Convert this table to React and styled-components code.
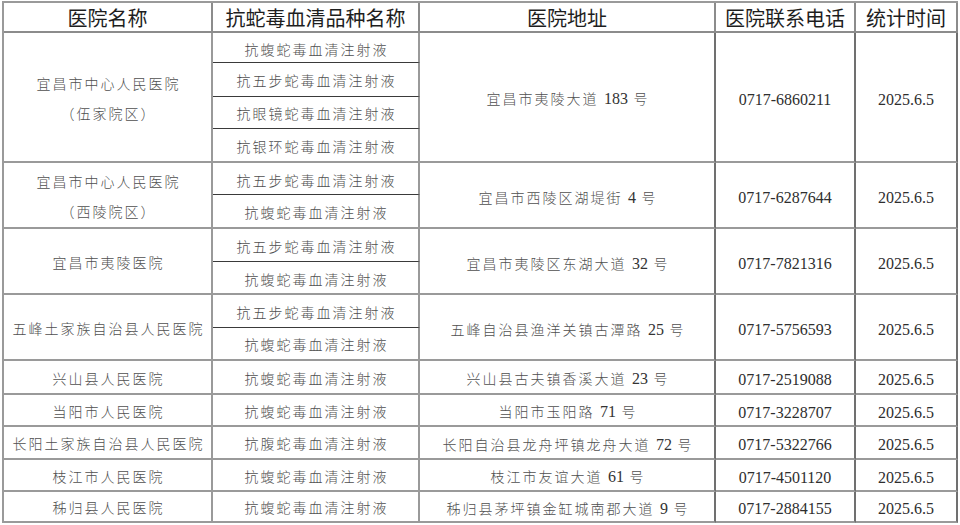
import React from "react";
import styled, { createGlobalStyle } from "styled-components";

const Global = createGlobalStyle`
  html, body { margin: 0; padding: 0; background: #fff; }
  body { font-family: "Liberation Serif", "Noto Sans CJK SC", serif; }
`;

const Page = styled.div`
  padding: 1px 0 0 2px;
`;

const Grid = styled.div`
  display: grid;
  grid-template-columns: 209px 207px 296px 140px 102px;
  grid-template-rows: ${(p) => p.$rows};
  border-top: 2px solid #9a9a9a;
  border-left: 2px solid #9a9a9a;
  width: max-content;
`;

const HeadCell = styled.div`
  box-sizing: border-box;
  display: flex;
  align-items: center;
  justify-content: center;
  border-right: 2px solid #8c8c8c;
  border-bottom: 2px solid #8c8c8c;
  font-family: "Noto Sans CJK SC", sans-serif;
  font-size: 20px;
  font-weight: 400;
  color: #1e1e1e;
  white-space: nowrap;
`;

const Cell = styled.div`
  box-sizing: border-box;
  display: flex;
  flex-direction: column;
  align-items: center;
  justify-content: center;
  padding-top: 6px;
  grid-row: span ${(p) => p.$span || 1};
  border-right: 2px solid ${(p) => (p.$dark ? "#707070" : "#9a9a9a")};
  border-bottom: ${(p) => (p.$inner ? "1px solid #3a3a3a" : "2px solid #9a9a9a")};
  white-space: nowrap;
`;

const CnText = styled.div`
  font-family: "Liberation Serif", "Noto Sans CJK SC", serif;
  font-size: 14px;
  font-weight: 300;
  letter-spacing: 2px;
  padding-left: 2px;
  color: #505050;
  line-height: 30px;
`;

const Num = styled.span`
  font-family: "Liberation Serif", serif;
  font-size: 16px;
  letter-spacing: 0;
  color: #333;
  font-weight: 400;
`;

const NumText = styled.div`
  font-family: "Liberation Serif", serif;
  font-size: 16px;
  color: #2e2e2e;
`;

const withNums = (s) =>
  s.split(/(\d+)/).map((part, i) =>
    /^\d+$/.test(part) ? <Num key={i}>{part}</Num> : part
  );

const groups = [
  {
    name: ["宜昌市中心人民医院", "（伍家院区）"],
    serums: ["抗蝮蛇毒血清注射液", "抗五步蛇毒血清注射液", "抗眼镜蛇毒血清注射液", "抗银环蛇毒血清注射液"],
    addr: "宜昌市夷陵大道 183 号",
    phone: "0717-6860211",
  },
  {
    name: ["宜昌市中心人民医院", "（西陵院区）"],
    serums: ["抗五步蛇毒血清注射液", "抗蝮蛇毒血清注射液"],
    addr: "宜昌市西陵区湖堤街 4 号",
    phone: "0717-6287644",
  },
  {
    name: ["宜昌市夷陵医院"],
    serums: ["抗五步蛇毒血清注射液", "抗蝮蛇毒血清注射液"],
    addr: "宜昌市夷陵区东湖大道 32 号",
    phone: "0717-7821316",
  },
  {
    name: ["五峰土家族自治县人民医院"],
    serums: ["抗五步蛇毒血清注射液", "抗蝮蛇毒血清注射液"],
    addr: "五峰自治县渔洋关镇古潭路 25 号",
    phone: "0717-5756593",
  },
  {
    name: ["兴山县人民医院"],
    serums: ["抗蝮蛇毒血清注射液"],
    addr: "兴山县古夫镇香溪大道 23 号",
    phone: "0717-2519088",
  },
  {
    name: ["当阳市人民医院"],
    serums: ["抗蝮蛇毒血清注射液"],
    addr: "当阳市玉阳路 71 号",
    phone: "0717-3228707",
  },
  {
    name: ["长阳土家族自治县人民医院"],
    serums: ["抗腹蛇毒血清注射液"],
    addr: "长阳自治县龙舟坪镇龙舟大道 72 号",
    phone: "0717-5322766",
  },
  {
    name: ["枝江市人民医院"],
    serums: ["抗蝮蛇毒血清注射液"],
    addr: "枝江市友谊大道 61 号",
    phone: "0717-4501120",
  },
  {
    name: ["秭归县人民医院"],
    serums: ["抗蝮蛇毒血清注射液"],
    addr: "秭归县茅坪镇金缸城南郡大道 9 号",
    phone: "0717-2884155",
  },
];

const rowHeights = [30, 33.7, 32.6, 33.7, 32.3, 34, 32.7, 33.3, 32.4, 33.3, 34, 32, 33, 32, 30.7];
const headers = ["医院名称", "抗蛇毒血清品种名称", "医院地址", "医院联系电话", "统计时间"];

export default function App() {
  const rows = ["30px", ...rowHeights.map((h) => `${h}px`)].join(" ");
  return (
    <Page>
      <Global />
      <Grid $rows={rows}>
        {headers.map((h) => (
          <HeadCell key={h}>{h}</HeadCell>
        ))}
        {groups.map((g, gi) => {
          const n = g.serums.length;
          return (
            <React.Fragment key={gi}>
              <Cell $span={n}>
                {g.name.map((l) => (
                  <CnText key={l}>{l}</CnText>
                ))}
              </Cell>
              <Cell $inner={n > 1}>
                <CnText>{g.serums[0]}</CnText>
              </Cell>
              <Cell $span={n} $dark>
                <CnText>{withNums(g.addr)}</CnText>
              </Cell>
              <Cell $span={n} $dark>
                <NumText>{g.phone}</NumText>
              </Cell>
              <Cell $span={n} $dark>
                <NumText>2025.6.5</NumText>
              </Cell>
              {g.serums.slice(1).map((s, si) => (
                <Cell key={si} $inner={si < n - 2}>
                  <CnText>{s}</CnText>
                </Cell>
              ))}
            </React.Fragment>
          );
        })}
      </Grid>
    </Page>
  );
}
